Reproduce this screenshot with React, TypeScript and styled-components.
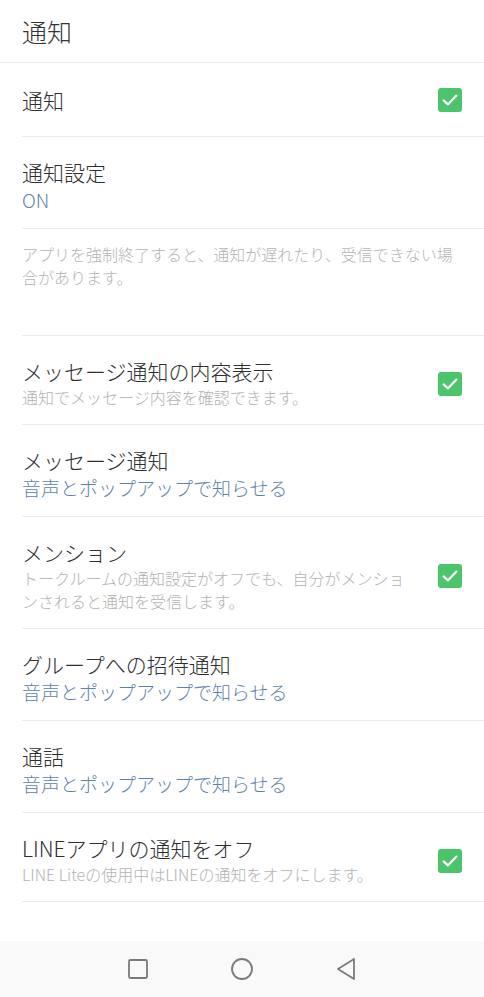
import React from "react";
import styled, { createGlobalStyle } from "styled-components";

const GlobalStyle = createGlobalStyle`
  html, body {
    margin: 0;
    padding: 0;
    background: #ffffff;
  }
  body {
    font-family: "Noto Sans CJK JP", "Noto Sans", Roboto, sans-serif;
    -webkit-font-smoothing: antialiased;
  }
`;

interface SettingItem {
  title: string;
  sub?: string;
  value?: string;
  checked?: boolean;
}

const items: SettingItem[] = [
  {
    title: "メッセージ通知の内容表示",
    sub: "通知でメッセージ内容を確認できます。",
    checked: true,
  },
  { title: "メッセージ通知", value: "音声とポップアップで知らせる" },
  {
    title: "メンション",
    sub: "トークルームの通知設定がオフでも、自分がメンションされると通知を受信します。",
    checked: true,
  },
  { title: "グループへの招待通知", value: "音声とポップアップで知らせる" },
  { title: "通話", value: "音声とポップアップで知らせる" },
  {
    title: "LINEアプリの通知をオフ",
    sub: "LINE Liteの使用中はLINEの通知をオフにします。",
    checked: true,
  },
];

const CheckBox = () => (
  <Box>
    <svg width="20" height="20" viewBox="0 0 20 20">
      <path
        d="M3.6 10.4 L7.9 14.4 L16.4 5.6"
        fill="none"
        stroke="#ffffff"
        strokeWidth="2.2"
        strokeLinecap="round"
        strokeLinejoin="round"
      />
    </svg>
  </Box>
);

const App = () => {
  return (
    <>
      <GlobalStyle />
      <Page>
        <Header>通知</Header>
        <Row $kind="single">
          <TextCol>
            <Title>通知</Title>
          </TextCol>
          <CheckBox />
        </Row>
        <Row $kind="value">
          <TextCol>
            <Title>通知設定</Title>
            <Value>ON</Value>
          </TextCol>
        </Row>
        <Note>
          アプリを強制終了すると、通知が遅れたり、受信できない場合があります。
        </Note>
        {items.map((item) => (
          <Row key={item.title} $kind={item.sub ? "sub" : "value"}>
            <TextCol>
              <Title>{item.title}</Title>
              {item.sub && <Sub>{item.sub}</Sub>}
              {item.value && <Value>{item.value}</Value>}
            </TextCol>
            {item.checked && <CheckBox />}
          </Row>
        ))}
        <NavBar>
          <svg width="22" height="22" viewBox="0 0 22 22">
            <rect
              x="2"
              y="2"
              width="18"
              height="18"
              rx="1.5"
              fill="none"
              stroke="#7a7a7a"
              strokeWidth="1.8"
            />
          </svg>
          <svg width="24" height="24" viewBox="0 0 24 24">
            <circle
              cx="12"
              cy="12"
              r="10"
              fill="none"
              stroke="#7a7a7a"
              strokeWidth="1.8"
            />
          </svg>
          <svg width="22" height="24" viewBox="0 0 22 24">
            <path
              d="M19 2 L3 12 L19 22 Z"
              fill="none"
              stroke="#7a7a7a"
              strokeWidth="1.8"
              strokeLinejoin="round"
            />
          </svg>
        </NavBar>
      </Page>
    </>
  );
};

const rowPadding = {
  single: "24px 22px 23px 0",
  value: "22px 22px 16px 0",
  sub: "22px 22px 15px 0",
};

const Page = styled.div`
  display: flex;
  flex-direction: column;
  min-height: 100vh;
  background: #ffffff;
`;

const Header = styled.div`
  height: 62px;
  padding: 0 22px;
  display: flex;
  align-items: center;
  font-size: 25px;
  font-weight: 300;
  color: #333333;
  border-bottom: 1px solid #ececec;
`;

const Row = styled.div<{ $kind: "single" | "value" | "sub" }>`
  margin-left: 22px;
  padding: ${({ $kind }) => rowPadding[$kind]};
  display: flex;
  align-items: center;
  border-bottom: 1px solid #ececec;
`;

const TextCol = styled.div`
  flex: 1;
  min-width: 0;
  padding-right: 30px;
`;

const Title = styled.div`
  font-size: 21px;
  font-weight: 300;
  line-height: 26px;
  color: #2e2e2e;
`;

const Sub = styled.div`
  margin-top: 2px;
  font-size: 16px;
  font-weight: 300;
  line-height: 23px;
  color: #b2b2b2;
`;

const Value = styled.div`
  margin-top: 3px;
  font-size: 19px;
  font-weight: 300;
  line-height: 24px;
  color: #5c82ad;
`;

const Note = styled.div`
  margin-left: 22px;
  padding: 14px 22px 46px 0;
  font-size: 16px;
  font-weight: 300;
  line-height: 23px;
  color: #b4b4b4;
  border-bottom: 1px solid #ececec;
`;

const Box = styled.div`
  flex: none;
  width: 24px;
  height: 24px;
  border-radius: 3px;
  background: #4cc46a;
  display: flex;
  align-items: center;
  justify-content: center;
`;

const NavBar = styled.div`
  margin-top: auto;
  height: 56px;
  background: #f9f9f9;
  display: flex;
  align-items: center;
  justify-content: center;
  gap: 81px;
`;

export default App;
